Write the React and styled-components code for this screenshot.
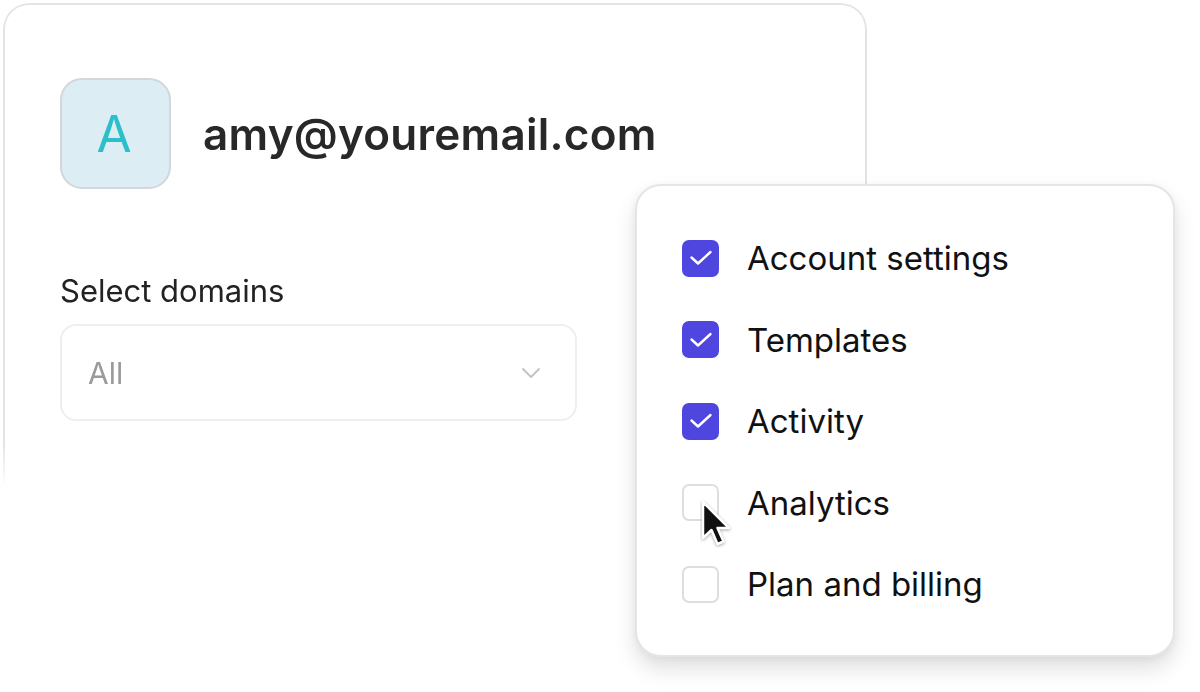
import React from 'react';
import styled, { createGlobalStyle } from 'styled-components';

const GlobalStyle = createGlobalStyle`
  html, body {
    margin: 0;
    padding: 0;
    background: #ffffff;
    font-family: Inter, "Noto Sans", "Liberation Sans", sans-serif;
  }
`;

const Page = styled.div`
  position: relative;
  width: 1200px;
  height: 692px;
  overflow: hidden;
  padding: 3px;
  box-sizing: border-box;
`;

const Card = styled.div`
  width: 864px;
  height: 500px;
  box-sizing: border-box;
  border: 2px solid #e4e4e4;
  border-bottom: none;
  border-radius: 26px 26px 0 0;
  padding: 73px 55px 0;
  -webkit-mask-image: linear-gradient(to bottom, #000 88%, transparent 97%);
  mask-image: linear-gradient(to bottom, #000 88%, transparent 97%);
`;

const UserRow = styled.div`
  display: flex;
  align-items: center;
  gap: 32px;
`;

const Avatar = styled.div`
  width: 111px;
  height: 111px;
  box-sizing: border-box;
  border: 2px solid #d3d6da;
  border-radius: 22px;
  background: #dcedf3;
  color: #2cbfcb;
  font-size: 51px;
  font-weight: 400;
  display: flex;
  align-items: center;
  justify-content: center;
  padding-right: 3px;
`;

const Email = styled.div`
  font-size: 44px;
  font-weight: 600;
  color: #282828;
  letter-spacing: 0.25px;
`;

const Label = styled.div`
  margin-top: 83px;
  font-size: 31px;
  color: #222222;
`;

const Select = styled.div`
  margin-top: 15px;
  width: 517px;
  height: 97px;
  box-sizing: border-box;
  border: 2px solid #eeeeee;
  border-radius: 16px;
  padding: 0 34px 0 26px;
  display: flex;
  align-items: center;
  justify-content: space-between;
  font-size: 30px;
  color: #9a9a9a;
`;

const Menu = styled.div`
  position: absolute;
  left: 635px;
  top: 184px;
  width: 540px;
  height: 473px;
  box-sizing: border-box;
  background: #ffffff;
  border: 2px solid #e5e5e5;
  border-radius: 26px;
  box-shadow: 0 12px 22px rgba(0, 0, 0, 0.12), 0 2px 8px rgba(0, 0, 0, 0.05);
  padding: 54px 0 0 45px;
  display: flex;
  flex-direction: column;
  gap: 45.5px;
`;

const Option = styled.div`
  position: relative;
  display: flex;
  align-items: center;
  gap: 28px;
  height: 36px;
  font-size: 33px;
  color: #111111;
`;

const Box = styled.div`
  width: 37px;
  height: 37px;
  box-sizing: border-box;
  border-radius: 7px;
  flex-shrink: 0;
  display: flex;
  align-items: center;
  justify-content: center;
  background: ${({ checked }) => (checked ? '#4e46df' : '#ffffff')};
  border: 2px solid ${({ checked }) => (checked ? '#4e46df' : '#dedede')};
`;

const Cursor = styled.svg`
  position: absolute;
  left: 18px;
  top: 15px;
`;

const Check = () => (
  <svg width="24" height="16" viewBox="0 0 24 16" fill="none">
    <path d="M2.5 7.5 L9 13.5 L21.5 2" stroke="#fff" strokeWidth="2.4" strokeLinecap="round" strokeLinejoin="round" />
  </svg>
);

const Chevron = () => (
  <svg width="20" height="12" viewBox="0 0 20 12" fill="none">
    <path d="M2 2 L10 10 L18 2" stroke="#c4c4c4" strokeWidth="2" strokeLinecap="round" strokeLinejoin="round" />
  </svg>
);

const options = [
  { label: 'Account settings', checked: true },
  { label: 'Templates', checked: true },
  { label: 'Activity', checked: true },
  { label: 'Analytics', checked: false, hover: true },
  { label: 'Plan and billing', checked: false },
];

export default function App() {
  return (
    <>
      <GlobalStyle />
      <Page>
        <Card>
          <UserRow>
            <Avatar>A</Avatar>
            <Email>amy@youremail.com</Email>
          </UserRow>
          <Label>Select domains</Label>
          <Select>
            <span>All</span>
            <Chevron />
          </Select>
        </Card>
        <Menu>
          {options.map((o) => (
            <Option key={o.label}>
              <Box checked={o.checked}>{o.checked && <Check />}</Box>
              {o.label}
              {o.hover && (
                <Cursor width="34" height="48" viewBox="0 0 34 48">
                  <path
                    d="M3 2 L3 38 L11.5 30 L17.5 44 L23.5 41.5 L17.5 28 L29 28 Z"
                    fill="#111"
                    stroke="#fff"
                    strokeWidth="2.5"
                    strokeLinejoin="round"
                    style={{ filter: 'drop-shadow(0 1px 1.5px rgba(0,0,0,0.35))' }}
                  />
                </Cursor>
              )}
            </Option>
          ))}
        </Menu>
      </Page>
    </>
  );
}
